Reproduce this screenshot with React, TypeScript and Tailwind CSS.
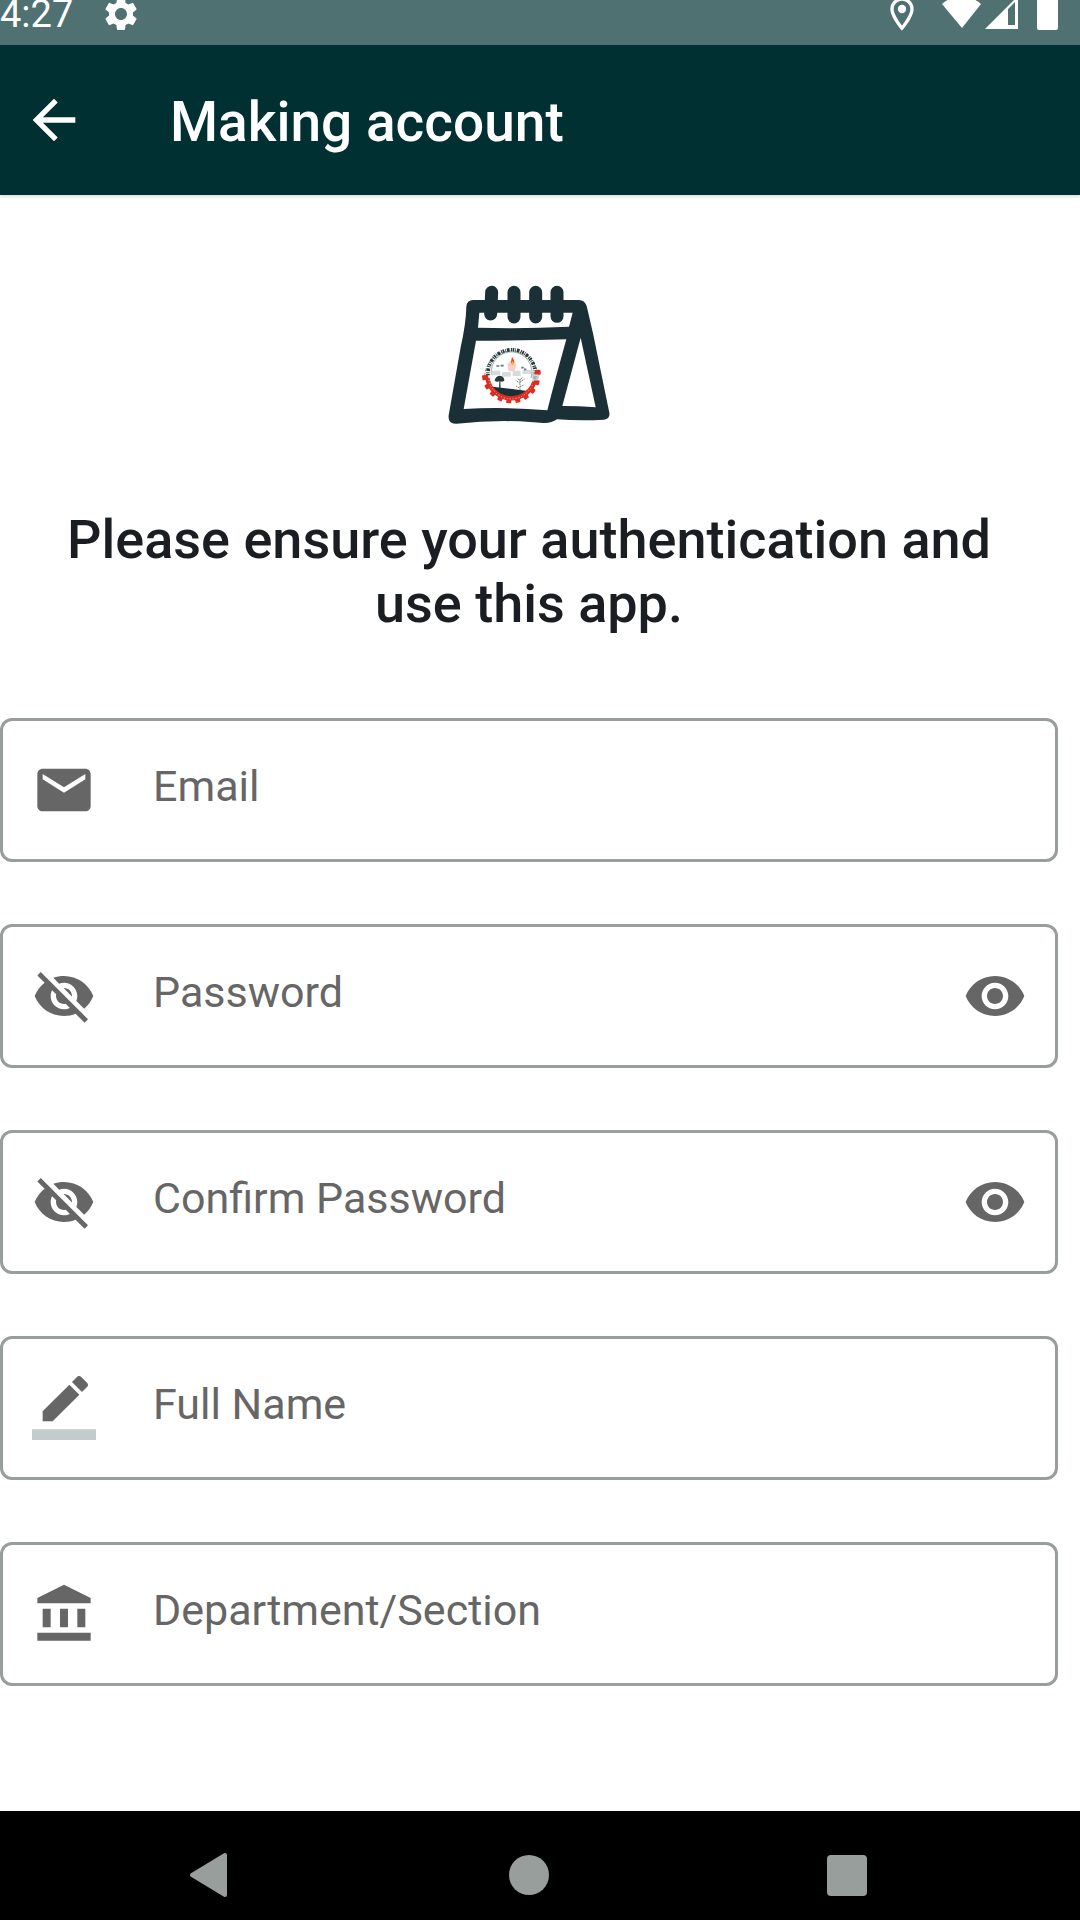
import { useState, type ReactNode } from "react";

const GEAR =
  "M19.14 12.94c.04-.3.06-.61.06-.94 0-.32-.02-.64-.07-.94l2.03-1.58c.18-.14.23-.41.12-.61l-1.92-3.32c-.12-.22-.37-.29-.59-.22l-2.39.96c-.5-.38-1.03-.7-1.62-.94l-.36-2.54c-.04-.24-.24-.41-.48-.41h-3.84c-.24 0-.43.17-.47.41l-.36 2.54c-.59.24-1.13.57-1.62.94l-2.39-.96c-.22-.08-.47 0-.59.22L2.74 8.87c-.12.21-.08.47.12.61l2.03 1.58c-.05.3-.09.63-.09.94s.02.64.07.94l-2.03 1.58c-.18.14-.23.41-.12.61l1.92 3.32c.12.22.37.29.59.22l2.39-.96c.5.38 1.03.7 1.62.94l.36 2.54c.05.24.24.41.48.41h3.84c.24 0 .44-.17.47-.41l.36-2.54c.59-.24 1.13-.56 1.62-.94l2.39.96c.22.08.47 0 .59-.22l1.92-3.32c.12-.22.07-.47-.12-.61l-2.01-1.58zM12 15.6c-1.98 0-3.6-1.62-3.6-3.6s1.62-3.6 3.6-3.6 3.6 1.62 3.6 3.6-1.62 3.6-3.6 3.6z";
const PIN =
  "M12 2C8.13 2 5 5.13 5 9c0 5.25 7 13 7 13s7-7.75 7-13c0-3.87-3.13-7-7-7zM7 9c0-2.76 2.24-5 5-5s5 2.24 5 5c0 2.88-2.88 7.19-5 9.88C9.92 16.21 7 11.85 7 9z";
const BACK = "M20 11H7.83l5.59-5.59L12 4l-8 8 8 8 1.41-1.41L7.83 13H20v-2z";
const MAIL =
  "M20 4H4c-1.1 0-1.99.9-1.99 2L2 18c0 1.1.9 2 2 2h16c1.1 0 2-.9 2-2V6c0-1.1-.9-2-2-2zm0 4l-8 5-8-5V6l8 5 8-5v2z";
const EYE =
  "M12 4.5C7 4.5 2.73 7.61 1 12c1.73 4.39 6 7.5 11 7.5s9.27-3.11 11-7.5c-1.73-4.39-6-7.5-11-7.5zM12 17c-2.76 0-5-2.24-5-5s2.24-5 5-5 5 2.24 5 5-2.24 5-5 5zm0-8c-1.66 0-3 1.34-3 3s1.34 3 3 3 3-1.34 3-3-1.34-3-3-3z";
const EYE_OFF =
  "M12 7c2.76 0 5 2.24 5 5 0 .65-.13 1.26-.36 1.83l2.92 2.92c1.51-1.26 2.7-2.89 3.43-4.75-1.73-4.39-6-7.5-11-7.5-1.4 0-2.74.25-3.98.7l2.16 2.16C10.74 7.13 11.35 7 12 7zM2 4.27l2.28 2.28.46.46C3.08 8.3 1.78 10.02 1 12c1.73 4.39 6 7.5 11 7.5 1.55 0 3.03-.3 4.38-.84l.42.42L19.73 22 21 20.73 3.27 3 2 4.27zM7.53 9.8l1.55 1.55c-.05.21-.08.43-.08.65 0 1.66 1.34 3 3 3 .22 0 .44-.03.65-.08l1.55 1.55c-.67.33-1.41.53-2.2.53-2.76 0-5-2.24-5-5 0-.79.2-1.53.53-2.2zm4.31-.78l3.15 3.15.02-.16c0-1.66-1.34-3-3-3l-.17.01z";
const PENCIL =
  "M17.75 7L14 3.25l-10 10V17h3.75l10-10zm2.96-2.96c.39-.39.39-1.02 0-1.41L18.37.29c-.39-.39-1.02-.39-1.41 0L15 2.25 18.75 6l1.96-1.96z";
const BANK =
  "M4 10h3v7H4zM10.5 10h3v7h-3zM2 19h20v3H2zM17 10h3v7h-3zM12 1L2 6v2h20V6z";

function Icon({ d, className, children }: { d: string; className: string; children?: ReactNode }) {
  return (
    <svg viewBox="0 0 24 24" fill="currentColor" aria-hidden="true" className={`shrink-0 ${className}`}>
      <path d={d} />
      {children}
    </svg>
  );
}

function StatusBar() {
  return (
    <div className="h-[45px] overflow-hidden bg-[#4f7171] text-white">
      <div className="flex h-7 items-center pr-[22px]">
        <span className="text-[38px] leading-none">4:27</span>
        <Icon d={GEAR} className="ml-7 size-10" />
        <Icon d={PIN} className="mr-5 ml-auto size-10">
          <circle cx="12" cy="9" r="2.5" />
        </Icon>
        <svg viewBox="0 0 76 40" fill="currentColor" aria-hidden="true" className="h-10 w-[76px] shrink-0">
          <path d="M0 10C11 0 28 0 39 10L20 34z" />
          <path fillRule="evenodd" d="M43 35L76 2v33zM66 15v16h7V8z" />
        </svg>
        <svg viewBox="0 0 21 40" fill="currentColor" aria-hidden="true" className="ml-[19px] h-10 w-[21px] shrink-0">
          <path d="M2 4h4V0h9v4h4a2 2 0 0 1 2 2v28a2 2 0 0 1-2 2H2a2 2 0 0 1-2-2V6a2 2 0 0 1 2-2z" />
        </svg>
      </div>
    </div>
  );
}

const TEETH = [-4, 18, 38, 57, 76, 95, 114, 133, 152, 172];

function Logo() {
  return (
    <svg viewBox="0 0 600 510" role="img" aria-label="Calendar logo" className="ml-0.5 h-[170px] w-[200px]">
      <path
        fill="#1b3036"
        fillRule="evenodd"
        d="M130 90H447Q464 90 470 108L489 190L538 428Q541 447 522 449Q450 453 381 448Q365 460 340 459L270 454Q170 451 80 461Q53 463 56 436L92 232Q108 160 109 110Q110 91 130 90zM148 128L144 173Q280 177 417 170L428 128zM138 212L101 417Q225 410 352 421Q375 330 409 208Q270 212 138 212zM452 203L397 408Q450 408 497 412z"
      />
      <g stroke="#1b3036" strokeWidth="39" strokeLinecap="round">
        <path d="M185 67L182 132M252 67V141M317 67V141M381 67V139" />
      </g>
      <path d="M164 318A80 80 0 1 1 324 328" fill="none" stroke="#53605f" strokeWidth="2" strokeDasharray="10 4" />
      <path d="M174 316A71 71 0 1 1 314 326" fill="none" stroke="#26393d" strokeWidth="11" strokeDasharray="5 3 2 3 8 4 3 2" />
      <path d="M184 314A61 61 0 1 1 303 324" fill="none" stroke="#718080" strokeWidth="2" />
      <path d="M187 350L300 364Q278 386 243 387Q210 384 187 350z" fill="#1b3036" />
      <g fill="#dc2d20">
        {TEETH.map((angle) => (
          <rect key={angle} x="314" y="305" width="18" height="15" rx="3" transform={`rotate(${angle} 244 312)`} />
        ))}
      </g>
      <path d="M172 324A73 73 0 0 0 313 336" fill="none" stroke="#dc2d20" strokeWidth="13" />
      <path d="M177 330A68 68 0 0 0 308 342" fill="none" stroke="#f4c6c0" strokeWidth="3" strokeDasharray="3 6" />
      <path
        d="M183 302h28v14h-28zM216 306h26v14h-26zM248 302h24v16h-24zM278 300h36v12h-36zM306 312h18v20h-18z"
        fill="#c3cdce"
        opacity=".7"
      />
      <path d="M232 282l10-10 5 8 8-7 4 12-5 19h-18z" fill="#f6d0c6" />
      <path d="M246 261q10 12 5 20q-8 1-8-6z" fill="#e5402f" />
      <path d="M247 273l5 5-3 9-5-5z" fill="#f3b33d" />
      <path d="M199 288h9M212 287h9M274 293h7M282 298h7" fill="none" stroke="#65757a" strokeWidth="5" />
      <path d="M194 332q2-14 15-15q14 2 14 15q-7 5-12 2l1 22h-5l1-22q-8 3-14-2z" fill="#26393d" />
      <path d="M270 360v-35M270 340l-13-9M270 336l14-9M270 350l13-6M258 348l10 6M263 326l7 5 6-8" fill="none" stroke="#7b8889" strokeWidth="3" strokeDasharray="5 2" />
    </svg>
  );
}

function Field({
  id,
  label,
  icon,
  type = "text",
}: {
  id: string;
  label: string;
  icon: ReactNode;
  type?: "text" | "email" | "password";
}) {
  const [visible, setVisible] = useState(false);
  const secret = type === "password";
  return (
    <div className="flex h-36 items-center rounded-xl border-3 border-[#979e9c] pr-7 pl-[29px] text-[#666666]">
      {icon}
      <input
        id={id}
        name={id}
        aria-label={label}
        type={secret && visible ? "text" : type}
        placeholder={label}
        className="ml-[57px] h-full min-w-0 flex-1 bg-transparent pb-2 text-[43px] outline-none placeholder:text-[#666666] placeholder:opacity-100"
      />
      {secret && (
        <button type="button" aria-label={`Show ${label}`} aria-pressed={visible} onClick={() => setVisible(!visible)}>
          <Icon d={EYE} className="size-16" />
        </button>
      )}
    </div>
  );
}

export default function App() {
  return (
    <div className="flex min-h-screen flex-col bg-white font-[Roboto,sans-serif]">
      <StatusBar />
      <header className="relative flex h-[150px] items-center bg-[#003031] pl-[22px] text-white shadow-[0_2px_3px_rgba(0,48,49,0.14)]">
        <button type="button" aria-label="Back">
          <Icon d={BACK} className="size-16" />
        </button>
        <h1 className="ml-[84px] pt-1 text-[55px] leading-16 font-medium">Making account</h1>
      </header>

      <main className="flex flex-1 flex-col items-center pt-[75px] pr-[22px] pb-16">
        <Logo />
        <h2 className="mt-[68px] max-w-[960px] text-center text-[54px] leading-16 font-medium text-[#1a1d22]">
          Please ensure your authentication and use this app.
        </h2>
        <form className="mt-[82px] flex w-full flex-col gap-[62px]">
          <Field id="email" label="Email" type="email" icon={<Icon d={MAIL} className="size-16" />} />
          <Field id="password" label="Password" type="password" icon={<Icon d={EYE_OFF} className="size-16" />} />
          <Field id="confirm" label="Confirm Password" type="password" icon={<Icon d={EYE_OFF} className="size-16" />} />
          <Field
            id="name"
            label="Full Name"
            icon={
              <Icon d={PENCIL} className="size-16">
                <path d="M0 20h24v4H0z" fill="#c3cccb" />
              </Icon>
            }
          />
          <Field id="department" label="Department/Section" icon={<Icon d={BANK} className="size-16" />} />
        </form>
      </main>

      <nav aria-label="System" className="flex h-[109px] items-center justify-center gap-[254px] bg-black pt-[18px] pr-[22px] text-[#979e9c]">
        <button type="button" aria-label="Back">
          <svg viewBox="0 0 64 64" fill="currentColor" stroke="currentColor" strokeWidth="4" strokeLinejoin="round" className="size-16">
            <path d="M13 32L46 12v40z" />
          </svg>
        </button>
        <button type="button" aria-label="Home">
          <svg viewBox="0 0 64 64" fill="currentColor" className="size-16">
            <circle cx="32" cy="32" r="20" />
          </svg>
        </button>
        <button type="button" aria-label="Recent apps">
          <svg viewBox="0 0 64 64" fill="currentColor" className="size-16">
            <rect x="12" y="12" width="40" height="41" rx="4" />
          </svg>
        </button>
      </nav>
    </div>
  );
}
